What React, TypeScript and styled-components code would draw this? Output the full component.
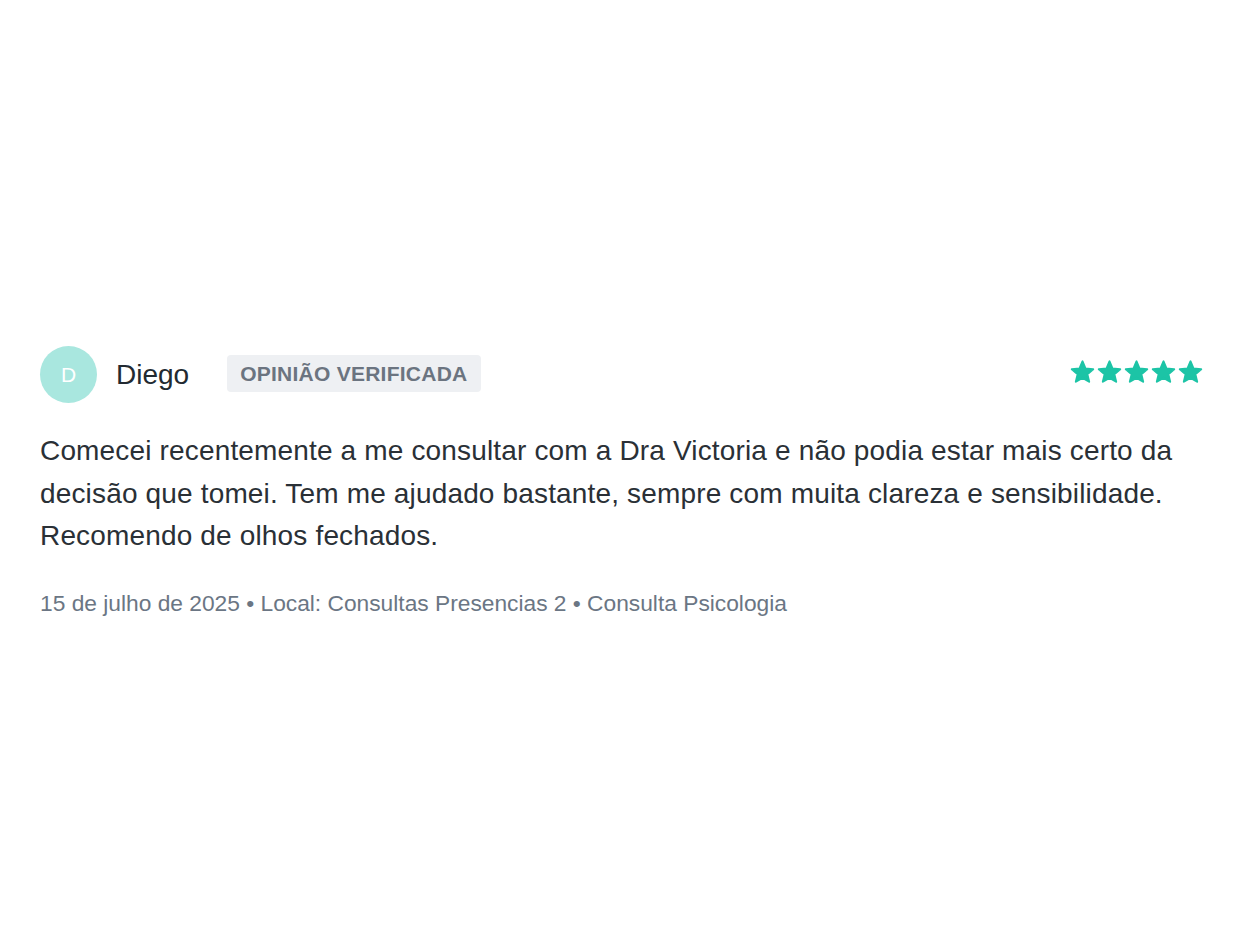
import React from 'react';
import styled, { createGlobalStyle } from 'styled-components';

const GlobalStyle = createGlobalStyle`
  html, body {
    margin: 0;
    padding: 0;
    background: #ffffff;
  }
  body {
    font-family: 'Liberation Sans', Arial, sans-serif;
  }
`;

const Page = styled.div`
  min-height: 100vh;
  display: flex;
  align-items: center;
  padding: 11px 46px 0 40px;
  box-sizing: border-box;
`;

const Review = styled.article`
  width: 100%;
  display: flex;
  flex-direction: column;
`;

const Header = styled.div`
  display: flex;
  align-items: center;
`;

const Avatar = styled.div`
  width: 57px;
  height: 57px;
  border-radius: 50%;
  background: #a9e7df;
  color: #ffffff;
  display: flex;
  align-items: center;
  justify-content: center;
  font-size: 21px;
  flex-shrink: 0;
`;

const Name = styled.span`
  margin-left: 19px;
  font-size: 28px;
  color: #222a31;
`;

const Badge = styled.span`
  margin-left: 38px;
  margin-bottom: 3px;
  padding: 6px 13px;
  line-height: 25px;
  background: #eef0f3;
  border-radius: 4px;
  color: #6b7480;
  font-size: 21px;
  font-weight: 700;
  letter-spacing: 0.25px;
`;

const Stars = styled.div`
  margin-left: auto;
  margin-top: -6px;
  display: flex;
`;

const Body = styled.p`
  margin: 27px 0 0;
  font-size: 28px;
  line-height: 42.5px;
  letter-spacing: 0.16px;
  color: #2a3036;
`;

const Meta = styled.div`
  margin-top: 33px;
  font-size: 22.75px;
  line-height: 24px;
  color: #6b7684;
`;

const Star: React.FC = () => (
  <svg width="27" height="27" viewBox="0 0 24 24">
    <path
      fill="#1cc4a6"
      stroke="#1cc4a6"
      strokeWidth="1.8"
      strokeLinejoin="round"
      d="M12 17.6l5.9 3.5-1.6-6.7 5.2-4.5-6.9-.6L12 3 9.4 9.3l-6.9.6 5.2 4.5-1.6 6.7z"
    />
  </svg>
);

const App: React.FC = () => (
  <>
    <GlobalStyle />
    <Page>
      <Review>
        <Header>
          <Avatar>D</Avatar>
          <Name>Diego</Name>
          <Badge>OPINIÃO VERIFICADA</Badge>
          <Stars>
            {[0, 1, 2, 3, 4].map((i) => (
              <Star key={i} />
            ))}
          </Stars>
        </Header>
        <Body>
          Comecei recentemente a me consultar com a Dra Victoria e não podia estar mais certo da
          decisão que tomei. Tem me ajudado bastante, sempre com muita clareza e sensibilidade.
          Recomendo de olhos fechados.
        </Body>
        <Meta>15 de julho de 2025 • Local: Consultas Presencias 2 • Consulta Psicologia</Meta>
      </Review>
    </Page>
  </>
);

export default App;
